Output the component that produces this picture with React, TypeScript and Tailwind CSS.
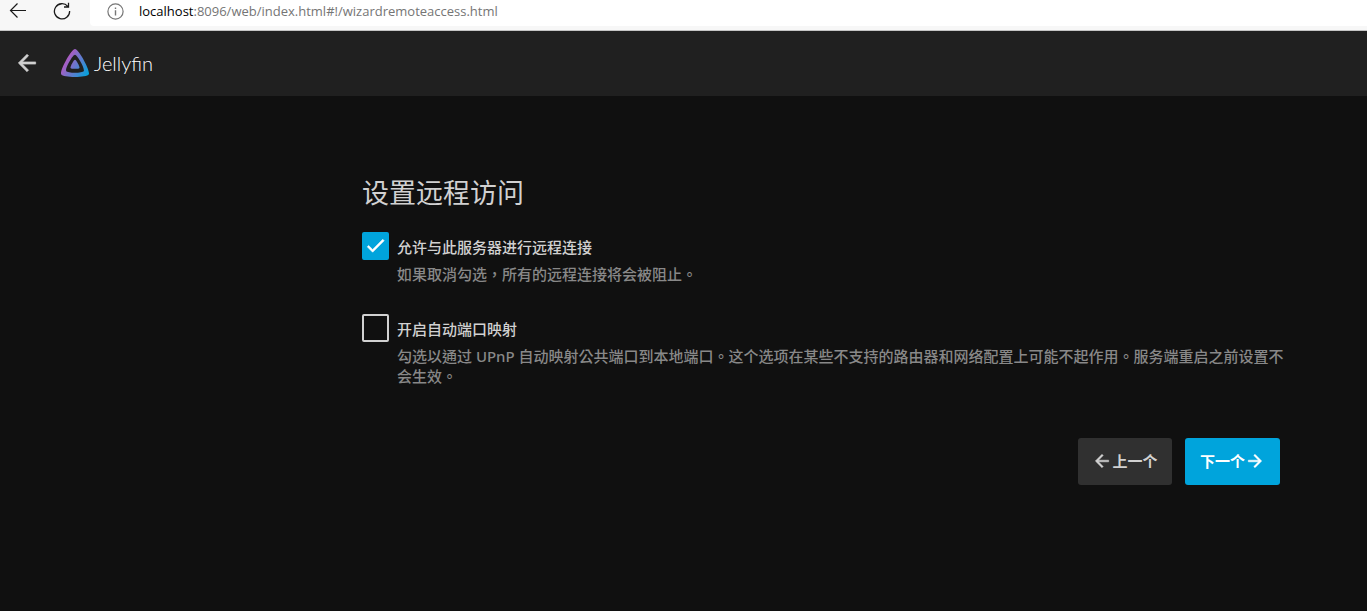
import React, { useState } from 'react';
import { clsx } from 'clsx';

const ICONS = {
  back: 'M20 11H7.830l5.590-5.590L12 4l-8 8 8 8 1.410-1.410L7.830 13H20v-2z',
  forward: 'M12 4l-1.410 1.410L16.170 11H4v2h12.170l-5.580 5.590L12 20l8-8-8-8z',
  check: 'M9 16.170L4.830 12l-1.420 1.410L9 19 21 7l-1.410-1.410L9 16.170z',
};

interface IconProps {
  name: keyof typeof ICONS;
  size: number;
  className?: string;
}

function Icon({ name, size, className }: IconProps) {
  return (
    <svg
      width={size}
      height={size}
      viewBox="0 0 24 24"
      aria-hidden="true"
      className={clsx('shrink-0 fill-current stroke-current', className)}
      strokeWidth="0.6"
    >
      <path d={ICONS[name]} />
    </svg>
  );
}

interface OptionProps {
  id: string;
  label: string;
  description: string;
  checked: boolean;
  onChange: (checked: boolean) => void;
}

function BrowserBar() {
  return (
    <div className="h-[31px] flex bg-[#f7f7f7] border-b border-[#c4c4c4]">
      <div className="w-[90px] flex items-start shrink-0 text-[#1a1a1a]">
        <button type="button" aria-label="Back" className="ml-[9px] mt-[2px]">
          <svg width="18" height="18" viewBox="0 0 18 18" fill="none" stroke="currentColor" strokeWidth="1.2">
            <path d="M17 8.5H1.5M8.5 1.500l-7 7 7 7" />
          </svg>
        </button>
        <button type="button" aria-label="Refresh" className="ml-[26px] mt-[2px]">
          <svg width="18" height="18" viewBox="0 0 18 18" fill="none" stroke="currentColor" strokeWidth="1.3">
            <path d="M16.6 9A7.600 7.600 0 1 1 14.800 4.400M15.500 .8v4.200h-4.500" />
          </svg>
        </button>
      </div>
      <div className="flex-1 h-[26px] flex items-start bg-white rounded-bl">
        <svg className="ml-[17px] mt-[3px] shrink-0" width="17" height="17" viewBox="0 0 17 17" fill="none" stroke="#767676" strokeWidth="1.2">
          <circle cx="8.5" cy="8.5" r="7.6" />
          <path d="M8.5 7.2v5.2M8.5 4.4v1.5" strokeWidth="1.4" />
        </svg>
        <p className="ml-[15px] mt-[1px] font-['Open_Sans',sans-serif] text-[13px] leading-5 text-[#757575] whitespace-nowrap">
          <span className="text-black">localhost</span>:8096/web/index.html#!/wizardremoteaccess.html
        </p>
      </div>
    </div>
  );
}

function Logo() {
  return (
    <svg width="30" height="30" viewBox="0 0 512 512" aria-hidden="true">
      <defs>
        <linearGradient id="jellyfin" gradientUnits="userSpaceOnUse" x1="110" y1="213" x2="496" y2="436">
          <stop offset="0" stopColor="#aa5cc3" />
          <stop offset="1" stopColor="#00a4dc" />
        </linearGradient>
      </defs>
      <path
        fill="url(#jellyfin)"
        d="M256 201.600c-20.400 0-86.200 119.300-76.200 139.400s142.500 19.900 152.400 0-55.700-139.400-76.200-139.400z"
      />
      <path
        fill="url(#jellyfin)"
        fillRule="evenodd"
        d="M256 15C194.400 15-10 385 20 447s441 61 472 0S317.600 15 256 15zm150.500 375.800c-19.500 39.300-281.100 39.800-300.900 0S215.700 115.600 256 115.600s170 235.900 150.500 275.200z"
      />
    </svg>
  );
}

function Option({ id, label, description, checked, onChange }: OptionProps) {
  return (
    <div className="flex items-start gap-2">
      <span className="relative w-[27px] h-7 shrink-0">
        <input
          id={id}
          type="checkbox"
          checked={checked}
          onChange={(e) => onChange(e.target.checked)}
          className="block w-full h-full appearance-none rounded-[2px] border-2 border-[#d1d1d1] checked:border-[#00a4dc] checked:bg-[#00a4dc]"
        />
        {checked && <Icon name="check" size={23} className="absolute top-[2px] left-[2px] text-white pointer-events-none" />}
      </span>
      <div>
        <label htmlFor={id} className="block mt-[3px] text-[15px] leading-6 font-medium text-[#d1d1d1]">
          {label}
        </label>
        <p className="mt-[5px] text-[15px] leading-5 font-medium text-[#888888]">{description}</p>
      </div>
    </div>
  );
}

export default function App() {
  const [remoteAccess, setRemoteAccess] = useState(true);
  const [portMapping, setPortMapping] = useState(false);

  return (
    <div
      lang="zh-TW"
      className="min-h-screen flex flex-col bg-[#101010] text-[#d1d1d1] font-['Noto_Sans','Noto_Sans_CJK_TC',sans-serif]"
    >
      <BrowserBar />

      <header className="h-[65px] pb-[2px] flex items-center bg-[#202020]">
        <button type="button" aria-label="返回" className="ml-[14px]">
          <Icon name="back" size={26} />
        </button>
        <a href="#" className="ml-5 flex items-center gap-1">
          <Logo />
          <span className="font-['Lato',sans-serif] font-light text-[20px] leading-6 text-white">Jellyfin</span>
        </a>
      </header>

      <main className="pt-[77px] pl-[362px] pr-20">
        <h1 className="text-[27px] leading-10">设置远程访问</h1>

        <form className="mt-[19px]" onSubmit={(e) => e.preventDefault()}>
          <div className="flex flex-col gap-[30px]">
            <Option
              id="remote-access"
              label="允许与此服务器进行远程连接"
              description="如果取消勾选，所有的远程连接将会被阻止。"
              checked={remoteAccess}
              onChange={setRemoteAccess}
            />
            <Option
              id="port-mapping"
              label="开启自动端口映射"
              description="勾选以通过 UPnP 自动映射公共端口到本地端口。这个选项在某些不支持的路由器和网络配置上可能不起作用。服务端重启之前设置不会生效。"
              checked={portMapping}
              onChange={setPortMapping}
            />
          </div>

          <div className="mt-[52px] mr-[7px] flex justify-end gap-[13px] text-[15px] leading-6 font-bold">
            <button type="button" className="w-[94px] h-[47px] pb-[2px] flex items-center justify-center rounded-[3px] bg-[#303030]">
              <Icon name="back" size={20} />
              上一个
            </button>
            <button type="submit" className="w-[95px] h-[47px] pb-[2px] flex items-center justify-center rounded-[3px] bg-[#00a4dc] text-white">
              下一个
              <Icon name="forward" size={20} />
            </button>
          </div>
        </form>
      </main>
    </div>
  );
}
